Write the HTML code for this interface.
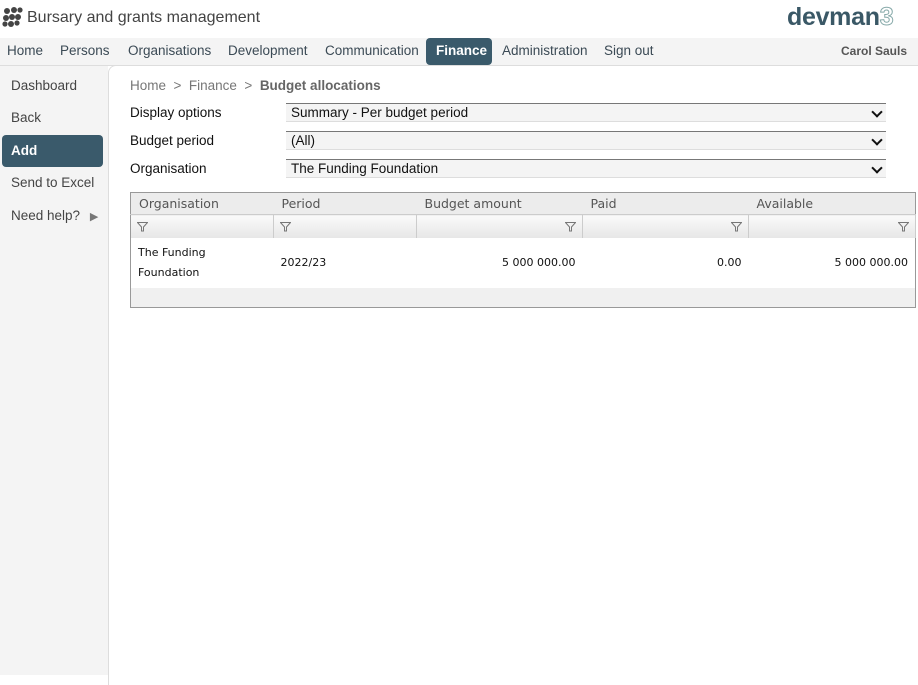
<!DOCTYPE html>
<html><head><style>
*{box-sizing:border-box;margin:0;padding:0}
body{width:918px;height:675px;background:#fff;font-family:"Liberation Sans",sans-serif;position:relative;overflow:hidden;color:#333}
.abs{position:absolute}
.nav{top:38px;left:0;width:918px;height:28px;background:#f4f4f4;border-bottom:1px solid #ddd}
.nav span{position:absolute;top:5px;font-size:13.5px;color:#3b4a55}
.side{top:66px;left:0;width:108px;height:609px;background:#f4f4f4}
.side div{position:absolute;left:11px;font-size:13.5px;color:#444}
.main{top:65px;left:108px;width:820px;height:620px;background:#fff;border-left:1px solid #ddd;border-top:1px solid #ddd;border-top-left-radius:8px}
.lbl{position:absolute;left:130px;font-size:13.5px;color:#111}
.sel{position:absolute;left:286px;width:600px;height:19px;background:#f4f4f4;border-top:1px solid #777;border-bottom:1px solid #ddd;font-size:13.5px;color:#111;padding:1px 5px;line-height:15px}
.sel:after{content:"";position:absolute;right:5px;top:4px;width:6px;height:6px;border-right:2px solid #111;border-bottom:2px solid #111;transform:rotate(45deg)}
table{position:absolute;left:130px;top:192px;width:786px;border:1px solid #999;border-collapse:collapse;font-family:"DejaVu Sans",sans-serif;font-size:11px}
th{background:#ececec;font-weight:normal;text-align:left;color:#555;height:22px;padding-left:8px;font-size:12.5px;border-bottom:1px solid #ccc}
.f td{height:23px;background:linear-gradient(#fafafa,#e6e6e6);border-right:1px solid #ccc;position:relative;padding:0 6px}
.d td{height:50px;background:#fff;color:#111;padding:0 7px;line-height:20px}
.ft td{height:20px;background:#f0f0f0}
.fi{display:inline-block;vertical-align:middle}
</style></head><body>
<div class="abs" style="left:2px;top:6px">
<svg width="22" height="22" viewBox="0 0 22 22"><g fill="#444"><circle cx="5" cy="5" r="3"/><circle cx="12" cy="4" r="3"/><circle cx="18" cy="4" r="2.6"/><circle cx="4" cy="12" r="3"/><circle cx="10" cy="11" r="3"/><circle cx="16" cy="11" r="3"/><circle cx="3" cy="18" r="2.6"/><circle cx="9" cy="18" r="3"/><circle cx="15" cy="17" r="2.6"/></g></svg></div>
<div class="abs" style="left:27px;top:9px;font-size:16px;color:#444">Bursary and grants management</div>
<div class="abs" style="left:787px;top:3px;font-size:25px;font-weight:bold;color:#3a5866;letter-spacing:-0.3px">devman<span style="color:#fff;-webkit-text-stroke:1px #8aa">3</span></div>
<div class="abs nav">
<span style="left:7px">Home</span><span style="left:60px">Persons</span><span style="left:128px">Organisations</span><span style="left:228px">Development</span><span style="left:325px">Communication</span>
<div class="abs" style="left:426px;top:0;width:66px;height:27px;background:#3a5a6b;border-radius:4px"></div>
<span style="left:436px;color:#fff;font-weight:bold">Finance</span><span style="left:502px">Administration</span><span style="left:604px">Sign out</span>
<span style="left:841px;font-size:12px;font-weight:bold;color:#555;top:6px">Carol Sauls</span>
</div>
<div class="abs side">
<div style="top:12px">Dashboard</div><div style="top:44px">Back</div>
<div style="left:2px;top:69px;width:101px;height:32px;background:#3a5a6b;border-radius:4px"></div>
<div style="top:77px;color:#fff;font-weight:bold">Add</div>
<div style="top:109px">Send to Excel</div><div style="top:142px">Need help? <span style="color:#777;font-size:11px;margin-left:6px">▶</span></div>
</div>
<div class="abs main"></div>
<div class="abs" style="left:130px;top:78px;font-size:13.5px;color:#777">Home &nbsp;&gt;&nbsp; Finance &nbsp;&gt;&nbsp; <b style="color:#666">Budget allocations</b></div>
<div class="lbl" style="top:105px">Display options</div><div class="sel" style="top:103px">Summary - Per budget period</div>
<div class="lbl" style="top:133px">Budget period</div><div class="sel" style="top:131px">(All)</div>
<div class="lbl" style="top:161px">Organisation</div><div class="sel" style="top:159px">The Funding Foundation</div>
<table>
<tr><th style="width:143px">Organisation</th><th style="width:143px">Period</th><th style="width:166px">Budget amount</th><th style="width:166px">Paid</th><th>Available</th></tr>
<tr class="f">
<td><svg class="fi" width="11" height="10" viewBox="0 0 11 10"><path d="M0.5 0.5h10L6.5 5v4h-2V5z" fill="none" stroke="#777"/></svg></td>
<td><svg class="fi" width="11" height="10" viewBox="0 0 11 10"><path d="M0.5 0.5h10L6.5 5v4h-2V5z" fill="none" stroke="#777"/></svg></td>
<td style="text-align:right"><svg class="fi" width="11" height="10" viewBox="0 0 11 10"><path d="M0.5 0.5h10L6.5 5v4h-2V5z" fill="none" stroke="#777"/></svg></td>
<td style="text-align:right"><svg class="fi" width="11" height="10" viewBox="0 0 11 10"><path d="M0.5 0.5h10L6.5 5v4h-2V5z" fill="none" stroke="#777"/></svg></td>
<td style="text-align:right"><svg class="fi" width="11" height="10" viewBox="0 0 11 10"><path d="M0.5 0.5h10L6.5 5v4h-2V5z" fill="none" stroke="#777"/></svg></td></tr>
<tr class="d"><td>The Funding Foundation</td><td>2022/23</td><td style="text-align:right">5 000 000.00</td><td style="text-align:right">0.00</td><td style="text-align:right">5 000 000.00</td></tr>
<tr class="ft"><td colspan="5"></td></tr>
</table>
</body></html>
